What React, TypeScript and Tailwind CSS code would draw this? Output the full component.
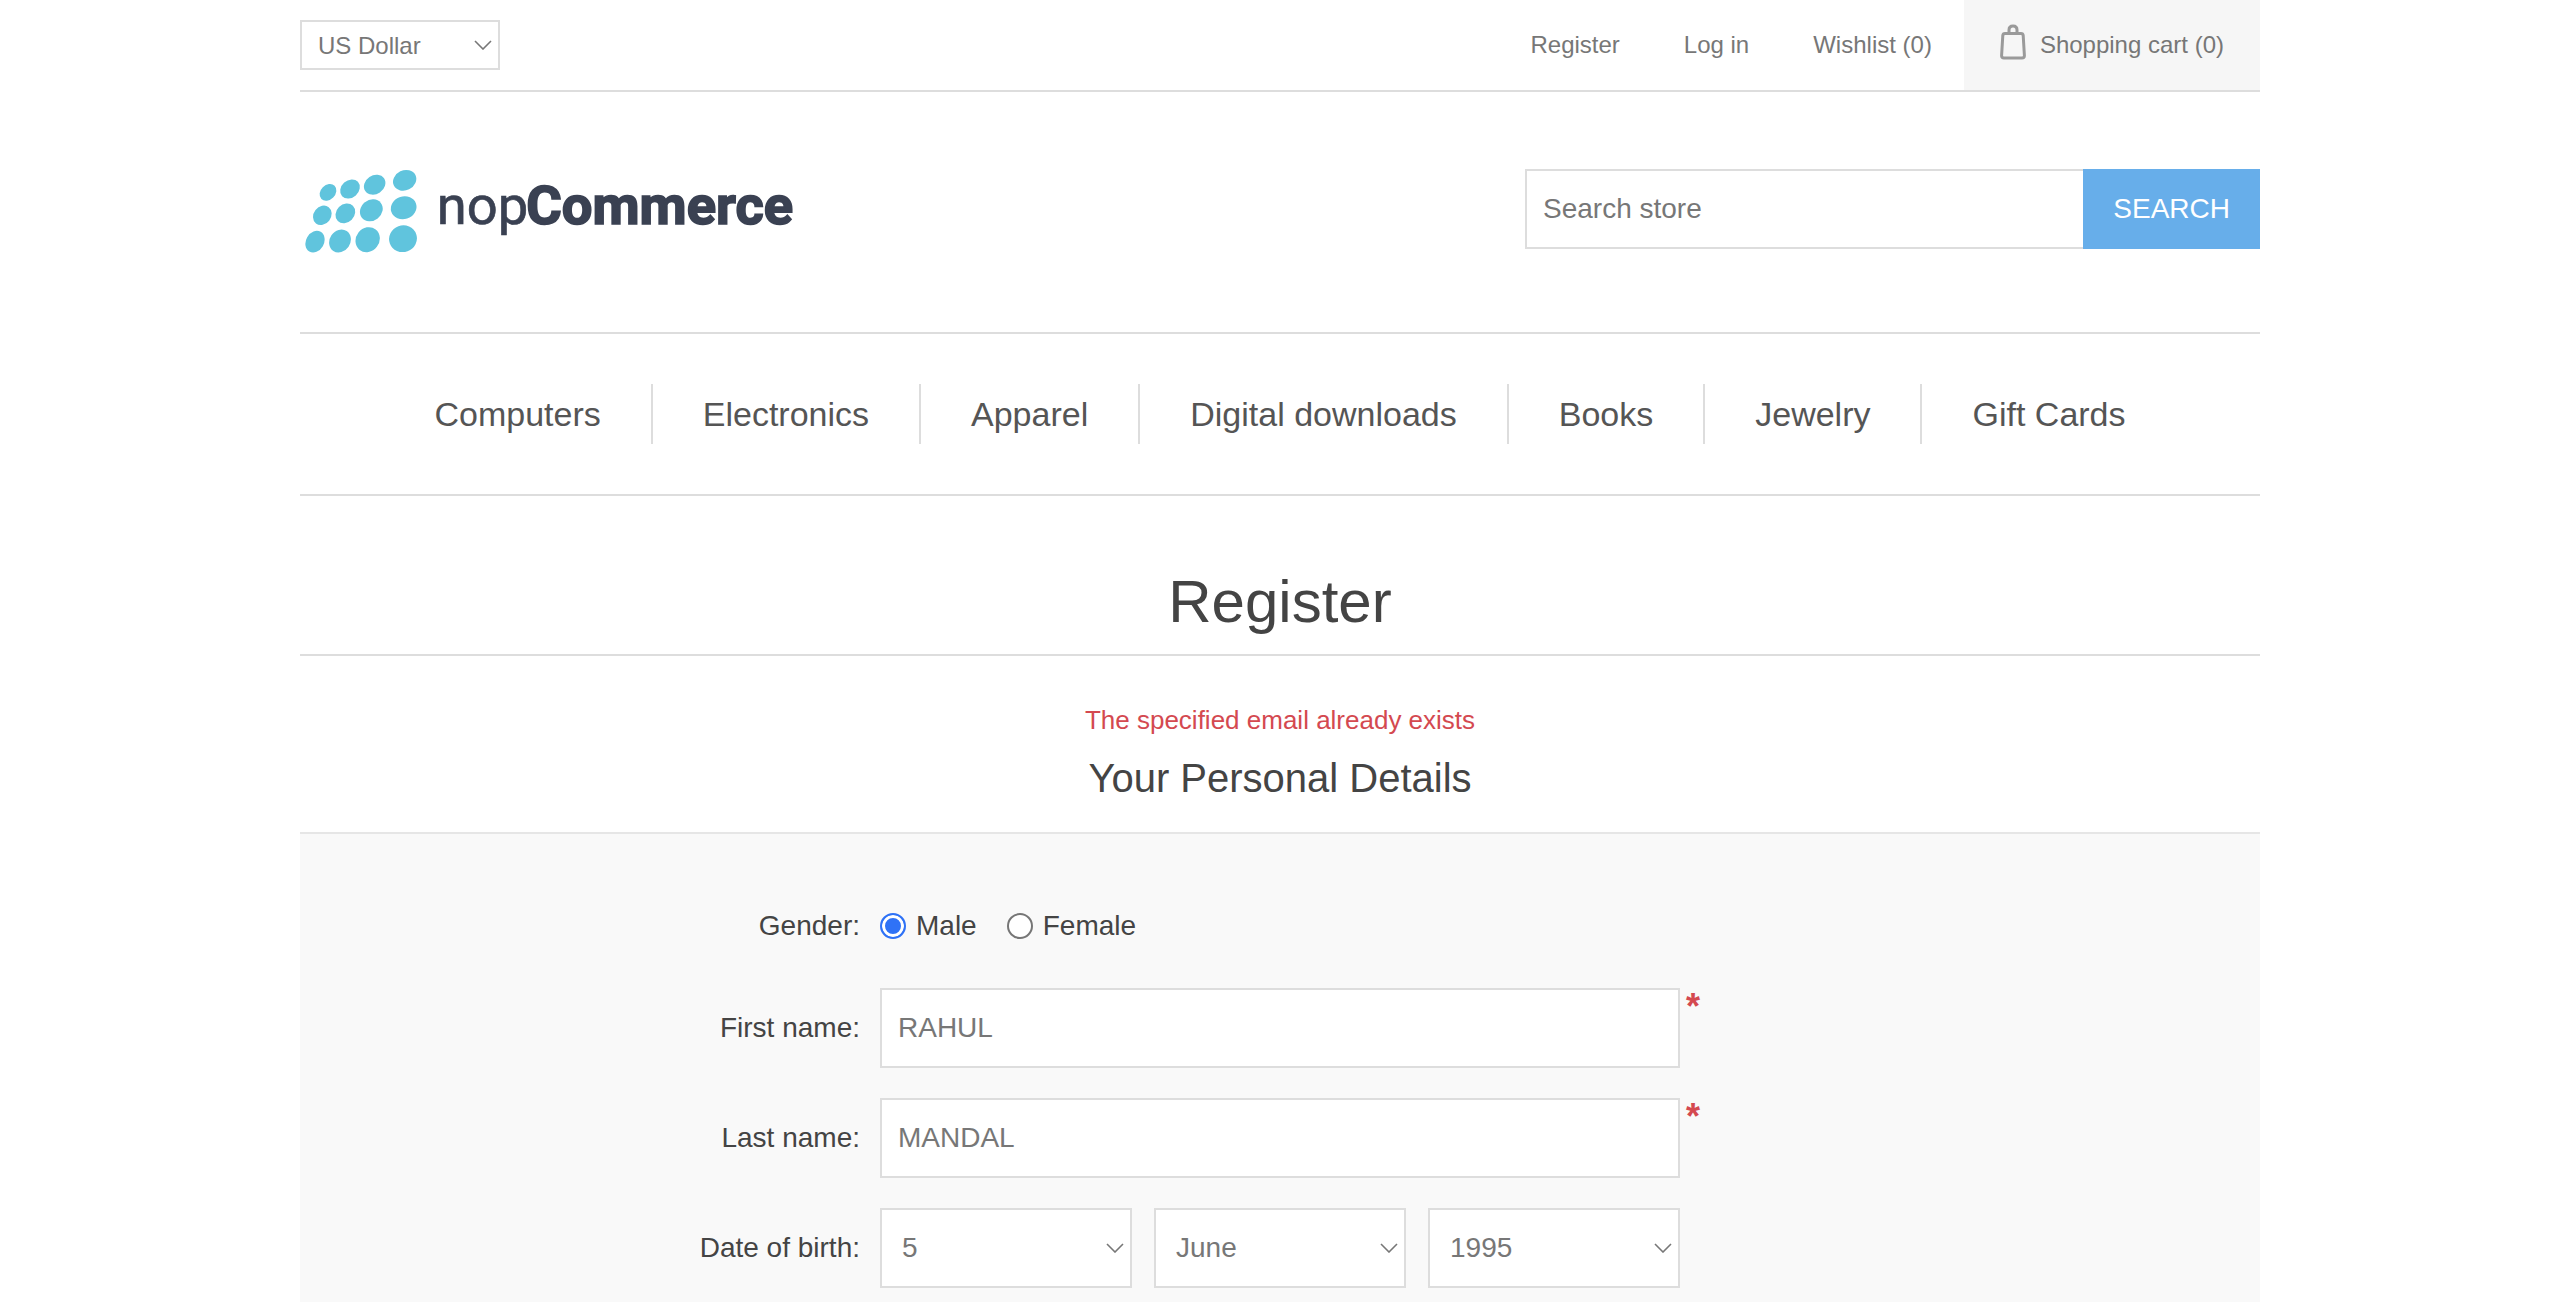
import React from "react";

const topLinks = ["Register", "Log in", "Wishlist (0)"];

const menu = [
  "Computers",
  "Electronics",
  "Apparel",
  "Digital downloads",
  "Books",
  "Jewelry",
  "Gift Cards",
];

// cx, cy, rx, ry, rotation
const dots = [
  [114, 127, 28, 22, -45],
  [180, 117, 32, 26, -42],
  [254, 104, 34, 28, -34],
  [344, 91, 36, 30, -26],
  [97, 196, 31, 26, -52],
  [166, 190, 32, 27, -45],
  [244, 181, 36, 31, -38],
  [341, 173, 39, 34, -18],
  [75, 275, 34, 27, -60],
  [150, 273, 36, 31, -56],
  [233, 269, 39, 35, -52],
  [339, 266, 42, 40, -20],
];

function Logo() {
  return (
    <svg viewBox="30 42 1500 270" className="h-[90px] w-[500px]" role="img" aria-label="nopCommerce">
      <g fill="#60c4dd">
        {dots.map(([x, y, rx, ry, r]) => (
          <ellipse key={`${x}-${y}`} cx={x} cy={y} rx={rx} ry={ry} transform={`rotate(${r} ${x} ${y})`} />
        ))}
      </g>
      <g fill="#3a4152" stroke="#3a4152" fontFamily="Roboto, sans-serif" fontSize="163">
        <text x="440" y="223" strokeWidth="2">nop</text>
        <text x="709" y="223" fontWeight="700" strokeWidth="5">Commerce</text>
      </g>
    </svg>
  );
}

function BagIcon() {
  return (
    <svg viewBox="0 0 26 36" className="h-9 w-[26px]" fill="none" stroke="#9a9a9a" strokeWidth="3" strokeLinejoin="round" aria-hidden="true">
      <path d="M5 9.500h16q2 0 2.200 2L24.400 31.500q.1 2.500-2.400 2.500H4q-2.500 0-2.400-2.500L2.800 11.500Q3 9.500 5 9.500Z" />
      <path d="M9 9.500V6Q9 2 13 2t4 4v3.500" />
    </svg>
  );
}

type PickerProps = {
  label: string;
  options: string[];
  className: string;
};

function Picker({ label, options, className }: PickerProps) {
  return (
    <div className="relative">
      <select
        aria-label={label}
        className={`block w-full appearance-none border-2 border-[#ddd] bg-white text-[#777] ${className}`}
      >
        {options.map((o) => (
          <option key={o}>{o}</option>
        ))}
      </select>
      <svg
        viewBox="0 0 18 10"
        className="pointer-events-none absolute top-1/2 right-2 h-2.5 w-[18px] -translate-y-1/2"
        fill="none"
        stroke="#777"
        strokeWidth="1.6"
        aria-hidden="true"
      >
        <path d="M1 1l8 8 8-8" />
      </svg>
    </div>
  );
}

const row = "grid grid-cols-[1fr_minmax(0,800px)_1fr] items-center";
const rowLabel = "pr-5 text-right";

function NameRow({ id, label, value }: { id: string; label: string; value: string }) {
  return (
    <div className={row}>
      <label htmlFor={id} className={rowLabel}>{label}</label>
      <input
        id={id}
        type="text"
        defaultValue={value}
        className="h-20 w-full border-2 border-[#ddd] bg-white px-4 text-[#777]"
      />
      <span className="self-start pl-1.5 text-4xl leading-[38px] font-bold text-[#d44950]">*</span>
    </div>
  );
}

function Radio({ label, checked }: { label: string; checked?: boolean }) {
  return (
    <label className="flex items-center gap-2.5">
      <input
        type="radio"
        name="gender"
        defaultChecked={checked}
        className="size-[26px] appearance-none rounded-full border-2 border-[#767676] bg-white checked:border-[#2f72f6] checked:bg-[#2f72f6] checked:shadow-[inset_0_0_0_3px_#fff]"
      />
      {label}
    </label>
  );
}

export default function App() {
  return (
    <div className="flex min-h-screen flex-col bg-white font-['Liberation_Sans',Arial,sans-serif] text-[28px] leading-8 text-[#444]">
      <div className="mx-auto flex w-full max-w-[1960px] flex-1 flex-col">
        <div className="flex justify-between border-b-2 border-[#ddd] text-2xl text-[#777]">
          <div className="w-[200px] py-5">
            <Picker label="Currency" options={["US Dollar", "Euro"]} className="h-[50px] px-4 pt-0.5" />
          </div>
          <nav className="flex h-[90px] items-center">
            {topLinks.map((t) => (
              <a key={t} href="#" className="px-8">{t}</a>
            ))}
            <a href="#" className="flex h-full items-center gap-3.5 bg-[#f6f6f6] px-9">
              <span className="pb-1.5"><BagIcon /></span>
              Shopping cart (0)
            </a>
          </nav>
        </div>

        <header className="flex h-60 items-center justify-between pb-1.5">
          <a href="#"><Logo /></a>
          <form className="flex w-[735px]" onSubmit={(e) => e.preventDefault()}>
            <input
              type="text"
              aria-label="Search store"
              placeholder="Search store"
              className="h-20 min-w-0 flex-1 border-2 border-r-0 border-[#ddd] px-4 placeholder:text-[#777]"
            />
            <button type="submit" className="h-20 bg-[#67aeea] px-[30px] text-white">SEARCH</button>
          </form>
        </header>

        <nav className="border-y-2 border-[#ddd] py-[50px]">
          <ul className="flex justify-center divide-x-2 divide-[#ddd] text-[34px] text-[#555]">
            {menu.map((m) => (
              <li key={m} className="px-[50px] leading-[60px]">
                <a href="#">{m}</a>
              </li>
            ))}
          </ul>
        </nav>

        <main className="flex flex-1 flex-col pt-[70px] text-center">
          <h1 className="h-[90px] border-b-2 border-[#ddd] text-[60px] leading-[72px]">Register</h1>
          <p className="mt-12 text-[26px] text-[#d44950]">The specified email already exists</p>
          <h2 className="mt-5 text-[40px] leading-[44px]">Your Personal Details</h2>
          <form className="mt-8 flex flex-1 flex-col gap-[30px] border-t-2 border-[#e6e6e6] bg-[#f9f9f9] pt-[60px] pb-3.5 text-left">
            <div className={`${row} h-16`} role="radiogroup" aria-label="Gender">
              <span className={rowLabel}>Gender:</span>
              <div className="flex gap-[30px]">
                <Radio label="Male" checked />
                <Radio label="Female" />
              </div>
            </div>
            <NameRow id="first" label="First name:" value="RAHUL" />
            <NameRow id="last" label="Last name:" value="MANDAL" />
            <div className={row} role="group" aria-label="Date of birth">
              <span className={rowLabel}>Date of birth:</span>
              <div className="grid grid-cols-3 gap-[22px]">
                <Picker label="Day" options={["5", "6"]} className="h-20 px-5" />
                <Picker label="Month" options={["June", "July"]} className="h-20 px-5" />
                <Picker label="Year" options={["1995", "1996"]} className="h-20 px-5" />
              </div>
            </div>
          </form>
        </main>
      </div>
    </div>
  );
}
